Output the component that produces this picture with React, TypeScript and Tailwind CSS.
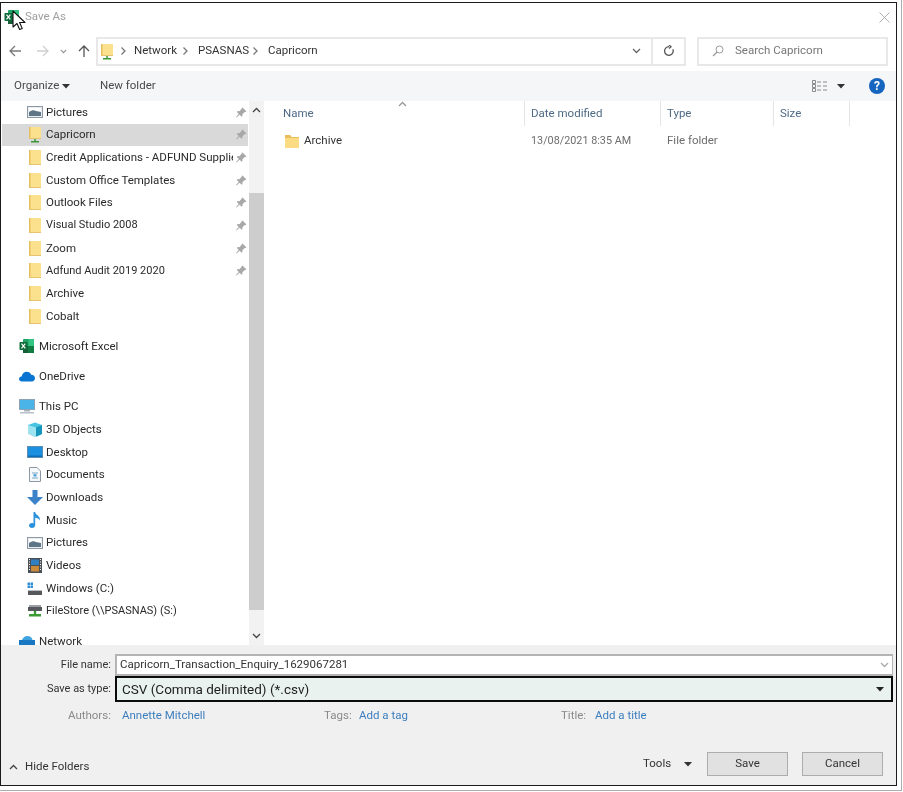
import React from "react";

const FONT = "font-['Roboto','Noto_Sans',sans-serif]";

function Pin() {
  return (
    <svg width="13" height="13" viewBox="0 0 13 13" className="shrink-0">
      <path d="M7.500 1.500l4 4-1 .6-.7-.2-2.400 2.400.1 1.700-.8.8-2.100-2.100L1.500 11.500 1 11l2.800-3.100-2-2 .8-.8 1.700.1L6.700 2.800l-.1-.7z" fill="#a8a8a8" />
    </svg>
  );
}

function Folder({ net = false }: { net?: boolean }) {
  return (
    <svg width="14" height="17" viewBox="0 0 14 17">
      <rect x="1" y="1" width="12" height={net ? 12 : 15} rx="0.500" fill="#fbe08d" />
      <rect x="1" y="1" width="1.500" height={net ? 12 : 15} fill="#e6bf62" />
      <rect x="1" y={net ? 12 : 15} width="12" height="1" fill="#e6c36f" />
      {net && (
        <>
          <rect x="6.300" y="13" width="1.500" height="2" fill="#3c9a34" />
          <rect x="3" y="15" width="8" height="1.500" fill="#3c9a34" />
        </>
      )}
    </svg>
  );
}

function PicturesIcon() {
  return (
    <svg width="16" height="12" viewBox="0 0 16 12">
      <rect x="0.500" y="0.500" width="15" height="11" fill="#e8edf1" stroke="#8d98a3" />
      <rect x="2" y="2" width="12" height="4" fill="#ffffff" />
      <path d="M2 6c3-2 5-2 7-1l5 1v4H2z" fill="#5f7688" />
    </svg>
  );
}

function ExcelIcon({ size = 16 }: { size?: number }) {
  return (
    <svg width={size} height={size} viewBox="0 0 16 16">
      <rect x="4" y="1" width="11" height="14" rx="1" fill="#21a366" />
      <rect x="9.500" y="1" width="5.500" height="7" fill="#33c481" />
      <rect x="4" y="8" width="5.500" height="7" fill="#185c37" />
      <rect x="9.500" y="8" width="5.500" height="7" fill="#107c41" />
      <rect x="0.500" y="4" width="8" height="8" rx="0.800" fill="#0e6b3a" />
      <path d="M2.500 5.700l3.800 4.600M6.300 5.700l-3.800 4.600" stroke="#ffffff" strokeWidth="1.200" />
    </svg>
  );
}

function OneDriveIcon() {
  return (
    <svg width="16" height="11" viewBox="0 0 16 11">
      <path d="M3 10.500C1 10.500 0 9.200 0 7.800 0 6.300 1.300 5.300 2.600 5.400 3.200 2.600 5.300 0.800 7.800 0.800c2.100 0 3.700 1.200 4.400 3 2-.2 3.800 1.300 3.800 3.400 0 1.900-1.400 3.300-3.200 3.300z" fill="#0a75d1" />
    </svg>
  );
}

function MonitorIcon() {
  return (
    <svg width="16" height="15" viewBox="0 0 16 15">
      <rect x="0.500" y="0.500" width="15" height="10" fill="#4ab4e8" stroke="#8aa4b4" />
      <rect x="5" y="11" width="6" height="1.500" fill="#a9b6bf" />
      <rect x="1" y="13" width="14" height="1.500" fill="#b9c2c9" />
    </svg>
  );
}

function ObjectsIcon() {
  return (
    <svg width="16" height="15" viewBox="0 0 16 15">
      <path d="M1 3l7-2.500L15 3v9l-5 2.500H7L1 11.500z" fill="#48c3e0" />
      <path d="M1 3l8 2.500v9H7L1 11.500z" fill="#9ee3f0" />
      <path d="M9 5.500L15 3v9l-6 2.500z" fill="#1796bc" />
    </svg>
  );
}

function DesktopIcon() {
  return (
    <svg width="16" height="12" viewBox="0 0 16 12">
      <rect x="0.500" y="0.500" width="15" height="11" fill="#1b8fe0" stroke="#5f8fb0" />
      <rect x="1" y="9.500" width="14" height="1.500" fill="#0d6eb5" />
    </svg>
  );
}

function DocumentsIcon() {
  return (
    <svg width="12" height="15" viewBox="0 0 12 15">
      <path d="M.5.500H8l3.500 3.500v10.500H.5z" fill="#f6f8fa" stroke="#8c98a3" />
      <path d="M3 6h6M3 11h6" stroke="#7ba7c6" strokeWidth="1.200" />
      <rect x="4.500" y="7.200" width="3" height="2.300" fill="#49a0d8" />
    </svg>
  );
}

function DownloadsIcon() {
  return (
    <svg width="16" height="15" viewBox="0 0 16 15">
      <path d="M5.500 0h5v7H16L8 15 0 7h5.500z" fill="#3b82c8" />
    </svg>
  );
}

function MusicIcon() {
  return (
    <svg width="12" height="16" viewBox="0 0 12 16">
      <path d="M4.500 0h1.600c.3 3 5.400 3.500 4.900 8.500C10 6.500 8 6 6.200 5.800V13c0 1.700-1.400 3-3.200 3C1.300 16 0 15 0 13.500 0 12 1.400 11 3 11c.6 0 1.100.1 1.500.4z" fill="#2c92de" />
    </svg>
  );
}

function VideosIcon() {
  return (
    <svg width="14" height="15" viewBox="0 0 14 15">
      <rect x="0" y="0" width="14" height="15" fill="#4a4f55" />
      <rect x="3" y="1.500" width="8" height="5.500" fill="#2f7fc1" />
      <rect x="3" y="8" width="8" height="5.500" fill="#c98b3a" />
      <path d="M1 1.500h1M1 4h1M1 6.500h1M1 9h1M1 11.500h1M12 1.500h1M12 4h1M12 6.500h1M12 9h1M12 11.500h1" stroke="#fff" strokeWidth="1" />
    </svg>
  );
}

function DriveIcon() {
  return (
    <svg width="16" height="13" viewBox="0 0 16 13">
      <rect x="0.500" y="0.500" width="2.500" height="2.500" fill="#2e8fd6" />
      <rect x="3.500" y="0.500" width="2.500" height="2.500" fill="#2e8fd6" />
      <rect x="0.500" y="3.500" width="2.500" height="2.500" fill="#2e8fd6" />
      <rect x="3.500" y="3.500" width="2.500" height="2.500" fill="#2e8fd6" />
      <path d="M1 8h14v1H1z" fill="#b8bec4" />
      <rect x="1" y="9" width="14" height="4" fill="#56585c" />
    </svg>
  );
}

function NetDriveIcon() {
  return (
    <svg width="14" height="14" viewBox="0 0 14 14">
      <rect x="1" y="1" width="12" height="2" fill="#9aa0a6" />
      <rect x="0" y="3" width="14" height="4" fill="#55585c" />
      <rect x="5.800" y="7" width="2.400" height="3" fill="#3c9a34" />
      <rect x="1" y="10" width="12" height="2.500" fill="#3c9a34" />
    </svg>
  );
}

function NetworkIcon() {
  return (
    <svg width="16" height="14" viewBox="0 0 16 14">
      <path d="M3 6c1-2.500 3-4 5.500-4S13 3.500 13.500 6z" fill="#3fa4e0" />
      <rect x="0" y="6" width="16" height="8" fill="#1a78c2" />
    </svg>
  );
}

type Item = { label: string; icon: React.ReactNode; pin?: boolean; selected?: boolean; small?: boolean };

const quick: Item[] = [
  { label: "Pictures", icon: <PicturesIcon />, pin: true },
  { label: "Capricorn", icon: <Folder net />, pin: true, selected: true },
  { label: "Credit Applications - ADFUND Suppliers", icon: <Folder />, pin: true },
  { label: "Custom Office Templates", icon: <Folder />, pin: true },
  { label: "Outlook Files", icon: <Folder />, pin: true },
  { label: "Visual Studio 2008", icon: <Folder />, pin: true, small: true },
  { label: "Zoom", icon: <Folder />, pin: true },
  { label: "Adfund Audit 2019 2020", icon: <Folder />, pin: true, small: true },
  { label: "Archive", icon: <Folder /> },
  { label: "Cobalt", icon: <Folder /> },
];

const pc: Item[] = [
  { label: "3D Objects", icon: <ObjectsIcon /> },
  { label: "Desktop", icon: <DesktopIcon /> },
  { label: "Documents", icon: <DocumentsIcon /> },
  { label: "Downloads", icon: <DownloadsIcon /> },
  { label: "Music", icon: <MusicIcon /> },
  { label: "Pictures", icon: <PicturesIcon /> },
  { label: "Videos", icon: <VideosIcon /> },
  { label: "Windows (C:)", icon: <DriveIcon /> },
  { label: "FileStore (\\\\PSASNAS) (S:)", icon: <NetDriveIcon />, small: true },
];

function Row({ item }: { item: Item }) {
  return (
    <div className={`flex h-[22.67px] items-center pl-[24px] ${item.selected ? "bg-[#d9d9d9]" : ""}`}>
      <div className="flex w-[17px] shrink-0 items-center justify-center">{item.icon}</div>
      <div className={`ml-[3px] w-[187px] overflow-hidden whitespace-nowrap text-[#2a2a2a] ${item.small ? "text-[11px]" : ""}`}>{item.label}</div>
      {item.pin && <div className="ml-[2px]"><Pin /></div>}
    </div>
  );
}

function TopRow({ label, icon, className = "" }: { label: string; icon: React.ReactNode; className?: string }) {
  return (
    <div className={`flex h-[22.67px] items-center pl-[17px] ${className}`}>
      <div className="flex w-[16px] shrink-0 items-center justify-center">{icon}</div>
      <div className="ml-[4px] whitespace-nowrap text-[#2a2a2a]">{label}</div>
    </div>
  );
}

function Chevron({ dir, className = "", color = "#555" }: { dir: "up" | "down"; className?: string; color?: string }) {
  return (
    <svg width="9" height="6" viewBox="0 0 9 6" className={className}>
      <path d={dir === "up" ? "M1 5l3.500-3.500L8 5" : "M1 1l3.500 3.500L8 1"} fill="none" stroke={color} strokeWidth="1.300" />
    </svg>
  );
}

function Tri({ className = "", color = "#333" }: { className?: string; color?: string }) {
  return (
    <svg width="8" height="5" viewBox="0 0 8 5" className={className}>
      <path d="M0 0h8L4 4.500z" fill={color} />
    </svg>
  );
}

function Arrow({ dir, color }: { dir: "left" | "right" | "up"; color: string }) {
  const d =
    dir === "left" ? "M13 7H2M7 2L2 7l5 5" : dir === "right" ? "M1 7h11M7 2l5 5-5 5" : "M7 13V2M2 7l5-5 5 5";
  return (
    <svg width="14" height="14" viewBox="0 0 14 14">
      <path d={d} fill="none" stroke={color} strokeWidth="1.300" />
    </svg>
  );
}

function Cursor() {
  return (
    <svg width="14" height="21" viewBox="0 0 14 21" className="absolute left-[11px] top-[7px]">
      <path d="M1 1v16l4-3.500 2.600 6 2.600-1.100-2.600-5.900H13z" fill="#ffffff" stroke="#111" strokeWidth="1.100" strokeLinejoin="round" />
    </svg>
  );
}

export default function App() {
  return (
    <div className={`h-[792px] w-[903px] bg-white text-[11.500px] blur-[0.45px] ${FONT}`}>
      <div className="h-[791px] w-[902px] border-b border-r border-[#a9adb0] pt-[2px]">
        <div className="relative flex h-[784px] w-[897px] flex-col border border-[#1c1c1c] bg-white">
          {/* Title */}
          <div className="flex h-[25px] shrink-0 items-center pl-[3px] pr-[5px] pt-[3px]">
            <ExcelIcon size={16} />
            <span className="ml-[5px] text-[#a0a0a0]">Save As</span>
            <svg width="11" height="11" viewBox="0 0 11 11" className="ml-auto mr-[1px]">
              <path d="M.5.500l10 10M10.500.500l-10 10" stroke="#b0b0b0" strokeWidth="1" />
            </svg>
          </div>
          <Cursor />

          {/* Address bar */}
          <div className="flex h-[43px] shrink-0 items-center pb-[1px] pt-[4px]">
            <div className="ml-[7px] flex w-[88px] items-center">
              <Arrow dir="left" color="#7a7a7a" />
              <div className="ml-[14px]"><Arrow dir="right" color="#d0d0d0" /></div>
              <div className="ml-[10px]"><Chevron dir="down" color="#909090" className="h-[5px] w-[7px]" /></div>
              <div className="ml-[10px]"><Arrow dir="up" color="#555" /></div>
            </div>
            <div className="flex h-[29px] w-[557px] items-center border-2 border-[#e8e8e8] pl-[2px] text-[#333]">
              <Folder net />
              <Chevron dir="down" className="ml-[5px] -rotate-90" color="#777" />
              <span className="ml-[6px] w-[42px]">Network</span>
              <Chevron dir="down" className="ml-[5px] -rotate-90" color="#777" />
              <span className="ml-[8px] w-[49px]">PSASNAS</span>
              <Chevron dir="down" className="ml-[4px] -rotate-90" color="#777" />
              <span className="ml-[8px]">Capricorn</span>
              <Chevron dir="down" className="ml-auto mr-[10px]" color="#666" />
            </div>
            <div className="flex h-[29px] w-[33px] items-center justify-center border-2 border-l-0 border-[#e8e8e8]">
              <svg width="12" height="12" viewBox="0 0 12 12">
                <path d="M9.800 4.200A4.300 4.300 0 1 1 6 1.700M6 0l2 1.700L6 3.400" fill="none" stroke="#555" strokeWidth="1.300" />
              </svg>
            </div>
            <div className="ml-[11px] flex h-[29px] w-[191px] items-center border-2 border-[#e8e8e8] pl-[13px] text-[#777]">
              <svg width="12" height="12" viewBox="0 0 12 12">
                <circle cx="7.500" cy="4.500" r="3.500" fill="none" stroke="#999" />
                <path d="M5 7l-4 4" stroke="#999" strokeWidth="1.200" />
              </svg>
              <span className="ml-[11px]">Search Capricorn</span>
            </div>
          </div>

          {/* Toolbar */}
          <div className="flex h-[30px] shrink-0 items-center bg-[#f5f6f7] pl-[13px] text-[#4a4a4a]">
            <span className="w-[48px]">Organize</span>
            <Tri />
            <span className="ml-[30px]">New folder</span>
            <div className="ml-auto flex items-center pr-[11px]">
              <svg width="16" height="13" viewBox="0 0 16 13">
                <path d="M.5.500h3v3h-3zM.5 4.500h3v3h-3zM.5 8.500h3v3h-3z" fill="none" stroke="#8a8a8a" />
                <path d="M5 2h4M11 2h4M5 6h4M11 6h4M5 10h4M11 10h4" stroke="#8a8a8a" />
              </svg>
              <Tri className="ml-[9px]" />
              <div className="ml-[24px] flex h-[16px] w-[16px] items-center justify-center rounded-full bg-[#1565c0] text-[12px] font-bold leading-none text-white">?</div>
            </div>
          </div>

          {/* Main */}
          <div className="flex min-h-0 flex-1">
            <div className="ml-[1px] w-[246px] shrink-0 overflow-hidden">
              {quick.map((it, i) => <Row key={i} item={it} />)}
              <TopRow label="Microsoft Excel" icon={<ExcelIcon />} className="mt-[7.600px]" />
              <TopRow label="OneDrive" icon={<OneDriveIcon />} className="mt-[7.600px]" />
              <TopRow label="This PC" icon={<MonitorIcon />} className="mt-[7.600px]" />
              {pc.map((it, i) => <Row key={i} item={it} />)}
              <TopRow label="Network" icon={<NetworkIcon />} className="mt-[7.600px]" />
            </div>
            <div className="ml-[1px] flex w-[15px] shrink-0 flex-col bg-[#f2f2f2]">
              <div className="flex h-[92px] shrink-0 justify-center pt-[6px]"><Chevron dir="up" color="#444" /></div>
              <div className="h-[417px] shrink-0 bg-[#cdcdcd]" />
              <div className="flex flex-1 items-end justify-center pb-[6px]"><Chevron dir="down" color="#444" /></div>
            </div>
            <div className="min-w-0 flex-1 pl-[2px]">
              <div className="relative flex h-[25px] items-center text-[#4e6a85]">
                <Chevron dir="up" color="#999" className="absolute left-[132px] top-[0px]" />
                <div className="flex h-full w-[259px] items-center border-r border-[#e5e5e5] pl-[17px]">Name</div>
                <div className="flex h-full w-[136px] items-center border-r border-[#e5e5e5] pl-[6px]">Date modified</div>
                <div className="flex h-full w-[113px] items-center border-r border-[#e5e5e5] pl-[6px]">Type</div>
                <div className="flex h-full w-[76px] items-center border-r border-[#e5e5e5] pl-[6px]">Size</div>
              </div>
              <div className="mt-[3px] flex h-[24px] items-center text-[#6d6d6d]">
                <div className="flex w-[259px] items-center pl-[19px]">
                  <svg width="14" height="14" viewBox="0 0 14 14">
                    <path d="M0 1h5l1.500 2H14v11H0z" fill="#fbdc82" />
                    <path d="M0 1h5l1.500 2H14v1H0z" fill="#e8bd5c" />
                  </svg>
                  <span className="ml-[5px] text-[#333]">Archive</span>
                </div>
                <div className="w-[136px] pl-[6px] text-[10.800px]">13/08/2021 8:35 AM</div>
                <div className="pl-[6px]">File folder</div>
              </div>
            </div>
          </div>

          {/* Form */}
          <div className="h-[140px] shrink-0 bg-[#f0f0f0] text-[#333]">
            <div className="box-content flex h-[22px] items-center pt-[9px]">
              <div className="w-[110px] text-right text-[11px]">File name:</div>
              <div className="ml-[4px] flex h-[22px] w-[778px] items-center border-2 border-r border-[#b4b4b4] bg-white pl-[3px] pr-[3px] text-[11.500px]">
                <span>Capricorn_Transaction_Enquiry_1629067281</span>
                <Chevron dir="down" color="#aaa" className="ml-auto" />
              </div>
            </div>
            <div className="flex h-[26px] items-center">
              <div className="w-[110px] text-right text-[11px]">Save as type:</div>
              <div className="ml-[4px] flex h-[26px] w-[778px] items-center border-2 border-[#0c0c0c] bg-[#e9f2ee] pl-[5px] pr-[7px] text-[13.500px] text-[#222]">
                <span>CSV (Comma delimited) (*.csv)</span>
                <Tri className="ml-auto" color="#222" />
              </div>
            </div>
            <div className="mt-[3px] flex h-[22px] items-center">
              <div className="w-[110px] text-right text-[#8a8a8a]">Authors:</div>
              <span className="ml-[11px] w-[202px] text-[#3d7ebf]">Annette Mitchell</span>
              <span className="w-[35px] text-[#8a8a8a]">Tags:</span>
              <span className="w-[202px] text-[#3d7ebf]">Add a tag</span>
              <span className="w-[34px] text-[#8a8a8a]">Title:</span>
              <span className="text-[#3d7ebf]">Add a title</span>
            </div>
            <div className="mt-[25px] flex h-[24px] items-center pl-[8px] pr-[13px]">
              <Chevron dir="up" color="#444" className="mt-[5px]" />
              <span className="ml-[7px] mt-[5px] text-[#333]">Hide Folders</span>
              <span className="ml-auto w-[27px]">Tools</span>
              <Tri className="ml-[14px]" />
              <button className="ml-[15px] h-[24px] w-[81px] border border-[#adadad] bg-[#e1e1e1]">Save</button>
              <button className="ml-[14px] h-[24px] w-[81px] border border-[#adadad] bg-[#e1e1e1]">Cancel</button>
            </div>
          </div>
        </div>
      </div>
    </div>
  );
}
